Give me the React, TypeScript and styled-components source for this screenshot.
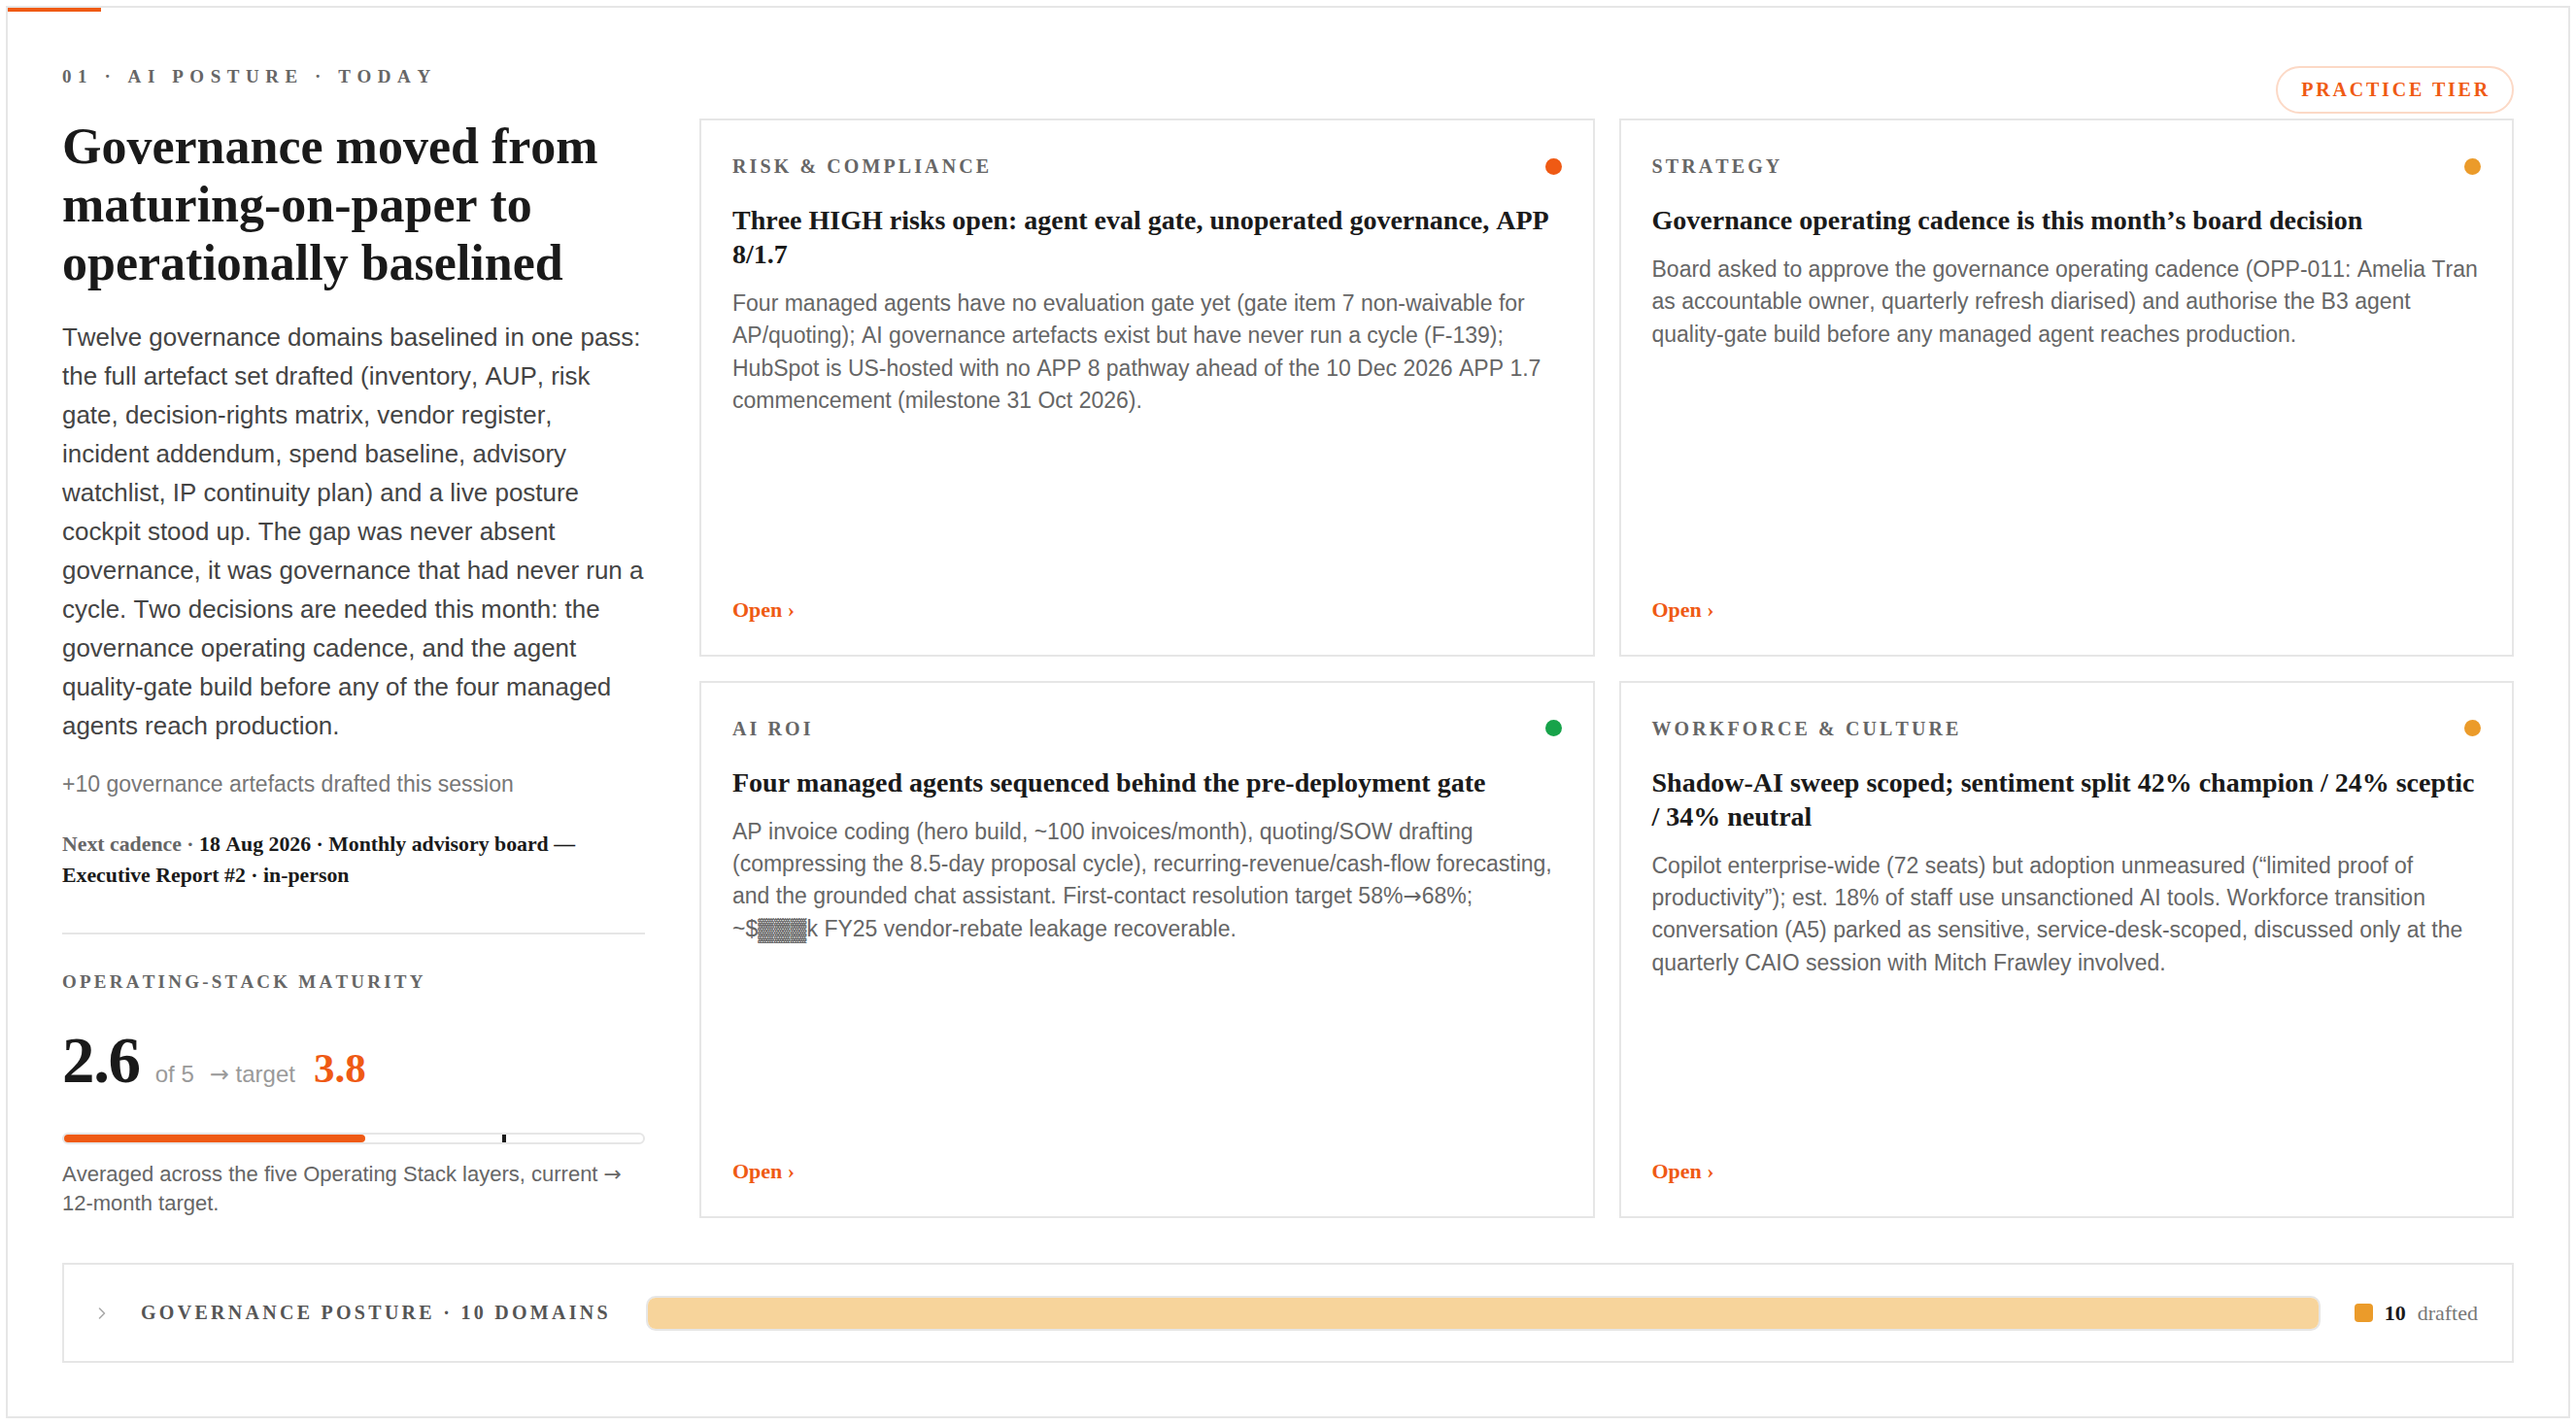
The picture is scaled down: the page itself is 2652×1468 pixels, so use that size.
import type { ReactNode } from "react";
import styled, { createGlobalStyle } from "styled-components";

const ORANGE = "#ef5a14";
const AMBER = "#eb9b2a";
const GREEN = "#17a34a";
const LINE = "#e6e6e6";
const SERIF = `"Liberation Serif", "Times New Roman", serif`;
const SANS = `"Liberation Sans", Arial, sans-serif`;

const GlobalStyle = createGlobalStyle`
  html, body {
    margin: 0;
    padding: 0;
    background: #fff;
  }
  body {
    font-family: ${SANS};
    font-kerning: none;
    color: #1a1a1a;
  }
  * { box-sizing: border-box; }
`;

const Frame = styled.section`
  position: relative;
  margin: 6px;
  border: 2px solid ${LINE};
  padding: 60px 56px 55px;
  background: #fff;
`;

const Accent = styled.span`
  position: absolute;
  top: 0;
  left: 0;
  width: 96px;
  height: 4px;
  background: ${ORANGE};
`;

const HeaderRow = styled.header`
  display: flex;
  justify-content: space-between;
  align-items: flex-start;
  margin-bottom: 4px;
`;

const Eyebrow = styled.div`
  margin-top: 1px;
  font-family: ${SERIF};
  font-weight: 700;
  font-size: 19px;
  line-height: 20px;
  letter-spacing: 0.345em;
  color: #666;
`;

const TierPill = styled.div`
  border: 2px solid #fcd9c6;
  border-radius: 999px;
  padding: 0 22px 0 24px;
  font-family: ${SERIF};
  font-weight: 700;
  font-size: 20px;
  line-height: 45px;
  letter-spacing: 0.14em;
  color: ${ORANGE};
`;

const Body = styled.div`
  display: grid;
  grid-template-columns: 600px 1fr;
  column-gap: 56px;
`;

const LeftCol = styled.div`
  display: flex;
  flex-direction: column;
`;

const Headline = styled.h1`
  margin: 0;
  font-family: ${SERIF};
  font-weight: 700;
  font-size: 52px;
  line-height: 60px;
  color: #1a1a1a;
`;

const Lede = styled.p`
  margin: 26px 0 0;
  font-size: 25.95px;
  line-height: 40px;
  color: #444;
`;

const Delta = styled.p`
  margin: 24px 0 0;
  font-size: 23px;
  line-height: 32px;
  color: #777;
`;

const Cadence = styled.p`
  margin: 30px 0 0;
  font-family: ${SERIF};
  font-weight: 700;
  font-size: 21.8px;
  line-height: 32px;
  color: #666;

  strong {
    color: #1a1a1a;
  }
`;

const Rule = styled.hr`
  margin: 43px 0 0;
  border: 0;
  height: 2px;
  background: ${LINE};
`;

const SectionLabel = styled.div`
  margin-top: 37px;
  font-family: ${SERIF};
  font-weight: 700;
  font-size: 19px;
  line-height: 24px;
  letter-spacing: 0.17em;
  color: #666;
`;

const StatRow = styled.div`
  margin-top: 35px;
  display: flex;
  align-items: baseline;
  gap: 16px;
  line-height: 1;
`;

const Score = styled.span`
  font-family: ${SERIF};
  font-weight: 700;
  font-size: 67px;
  letter-spacing: -0.02em;
  color: #1a1a1a;
`;

const ScoreMeta = styled.span`
  font-size: 24px;
  color: #9a9a9a;
`;

const Arrow = styled.span`
  font-family: "DejaVu Sans", sans-serif;
`;

const TargetScore = styled.span`
  margin-left: 3px;
  font-family: ${SERIF};
  font-weight: 700;
  font-size: 43px;
  color: ${ORANGE};
`;

const Track = styled.div`
  position: relative;
  margin-top: 41px;
  height: 12px;
  border: 2px solid ${LINE};
  border-radius: 6px;
`;

const TrackFill = styled.div`
  height: 100%;
  background: ${ORANGE};
  border-radius: 4px;
`;

const TargetMark = styled.span`
  position: absolute;
  top: 0;
  bottom: 0;
  width: 4px;
  margin-left: -2px;
  background: #1a1a1a;
`;

const Note = styled.p`
  margin: 16px 0 0;
  font-size: 22px;
  line-height: 30px;
  color: #666;
`;

const CardGrid = styled.div`
  display: grid;
  grid-template-columns: 1fr 1fr;
  grid-template-rows: 1fr 1fr;
  gap: 25px;
  margin-top: 1px;
`;

const Card = styled.article`
  display: flex;
  flex-direction: column;
  border: 2px solid ${LINE};
  padding: 35px 32px 33px;
  background: #fff;
`;

const CardHead = styled.div`
  display: flex;
  justify-content: space-between;
  align-items: center;
  height: 24px;
`;

const CardLabel = styled.span`
  font-family: ${SERIF};
  font-weight: 700;
  font-size: 20px;
  line-height: 24px;
  letter-spacing: 0.155em;
  color: #666;
`;

const Dot = styled.span<{ $color: string }>`
  width: 17px;
  height: 17px;
  border-radius: 50%;
  background: ${(p) => p.$color};
`;

const CardTitle = styled.h3`
  margin: 26px 0 0;
  font-family: ${SERIF};
  font-weight: 700;
  font-size: 28px;
  line-height: 35px;
  color: #1a1a1a;
`;

const CardBody = styled.p`
  margin: 17px 0 0;
  font-size: 23px;
  line-height: 33.4px;
  color: #666;
`;

const OpenLink = styled.a`
  margin-top: auto;
  align-self: flex-start;
  font-family: ${SERIF};
  font-weight: 700;
  font-size: 22px;
  line-height: 26px;
  color: ${ORANGE};
  text-decoration: none;
`;

const Posture = styled.div`
  display: flex;
  align-items: center;
  gap: 36px;
  margin-top: 46px;
  height: 103px;
  padding: 0 35px 0 34px;
  border: 2px solid ${LINE};
`;

const Chevron = styled.svg`
  flex: none;
  margin-right: -1px;
`;

const PostureLabel = styled.span`
  font-family: ${SERIF};
  font-weight: 700;
  font-size: 20px;
  letter-spacing: 0.164em;
  color: #555;
  white-space: nowrap;
`;

const PostureBar = styled.div`
  flex: 1;
  display: flex;
  height: 36px;
  border: 2px solid ${LINE};
  border-radius: 10px;
  overflow: hidden;
`;

const PostureSegment = styled.div<{ $color: string }>`
  background: ${(p) => p.$color};
`;

const Legend = styled.div`
  display: flex;
  align-items: center;
  gap: 12px;
  margin-left: -1px;
  font-family: ${SERIF};
  font-size: 22px;
`;

const Swatch = styled.span<{ $color: string }>`
  width: 19px;
  height: 19px;
  border-radius: 4px;
  background: ${(p) => p.$color};
`;

const LegendCount = styled.span`
  font-weight: 700;
  color: #1a1a1a;
`;

const LegendText = styled.span`
  color: #777;
`;

type Pillar = {
  label: string;
  status: string;
  title: string;
  body: ReactNode;
};

const pillars: Pillar[] = [
  {
    label: "RISK & COMPLIANCE",
    status: ORANGE,
    title: "Three HIGH risks open: agent eval gate, unoperated governance, APP 8/1.7",
    body: "Four managed agents have no evaluation gate yet (gate item 7 non-waivable for AP/quoting); AI governance artefacts exist but have never run a cycle (F-139); HubSpot is US-hosted with no APP 8 pathway ahead of the 10 Dec 2026 APP 1.7 commencement (milestone 31 Oct 2026).",
  },
  {
    label: "STRATEGY",
    status: AMBER,
    title: "Governance operating cadence is this month’s board decision",
    body: "Board asked to approve the governance operating cadence (OPP-011: Amelia Tran as accountable owner, quarterly refresh diarised) and authorise the B3 agent quality-gate build before any managed agent reaches production.",
  },
  {
    label: "AI ROI",
    status: GREEN,
    title: "Four managed agents sequenced behind the pre-deployment gate",
    body: (
      <>
        AP invoice coding (hero build, ~100 invoices/month), quoting/SOW drafting (compressing the
        8.5-day proposal cycle), recurring-revenue/cash-flow forecasting, and the grounded chat
        assistant. First-contact resolution target 58%<Arrow>→</Arrow>68%; ~$▓▓▓k FY25
        vendor-rebate leakage recoverable.
      </>
    ),
  },
  {
    label: "WORKFORCE & CULTURE",
    status: AMBER,
    title: "Shadow-AI sweep scoped; sentiment split 42% champion / 24% sceptic / 34% neutral",
    body: "Copilot enterprise-wide (72 seats) but adoption unmeasured (“limited proof of productivity”); est. 18% of staff use unsanctioned AI tools. Workforce transition conversation (A5) parked as sensitive, service-desk-scoped, discussed only at the quarterly CAIO session with Mitch Frawley involved.",
  },
];

const maturity = { current: 2.6, target: 3.8, max: 5 };

const App = () => {
  return (
    <>
      <GlobalStyle />
      <Frame>
        <Accent />
        <HeaderRow>
          <Eyebrow>01 · AI POSTURE · TODAY</Eyebrow>
          <TierPill>PRACTICE TIER</TierPill>
        </HeaderRow>

        <Body>
          <LeftCol>
            <Headline>
              Governance moved from maturing-on-paper to operationally baselined
            </Headline>
            <Lede>
              Twelve governance domains baselined in one pass: the full artefact set drafted
              (inventory, AUP, risk gate, decision-rights matrix, vendor register, incident
              addendum, spend baseline, advisory watchlist, IP continuity plan) and a live
              posture cockpit stood up. The gap was never absent governance, it was governance
              that had never run a cycle. Two decisions are needed this month: the governance
              operating cadence, and the agent quality-gate build before any of the four
              managed agents reach production.
            </Lede>
            <Delta>+10 governance artefacts drafted this session</Delta>
            <Cadence>
              Next cadence · <strong>18 Aug 2026 · Monthly advisory board — Executive Report #2 · in-person</strong>
            </Cadence>

            <Rule />

            <SectionLabel>OPERATING-STACK MATURITY</SectionLabel>
            <StatRow>
              <Score>{maturity.current}</Score>
              <ScoreMeta>of {maturity.max}</ScoreMeta>
              <ScoreMeta>
                <Arrow>→</Arrow> target
              </ScoreMeta>
              <TargetScore>{maturity.target}</TargetScore>
            </StatRow>
            <Track>
              <TrackFill style={{ width: `${(maturity.current / maturity.max) * 100}%` }} />
              <TargetMark style={{ left: `${(maturity.target / maturity.max) * 100}%` }} />
            </Track>
            <Note>
              Averaged across the five Operating Stack layers, current <Arrow>→</Arrow> 12-month
              target.
            </Note>
          </LeftCol>

          <CardGrid>
            {pillars.map((p) => (
              <Card key={p.label}>
                <CardHead>
                  <CardLabel>{p.label}</CardLabel>
                  <Dot $color={p.status} />
                </CardHead>
                <CardTitle>{p.title}</CardTitle>
                <CardBody>{p.body}</CardBody>
                <OpenLink href="#">Open ›</OpenLink>
              </Card>
            ))}
          </CardGrid>
        </Body>

        <Posture>
          <Chevron width="10" height="14" viewBox="0 0 10 14" fill="none">
            <path d="M2.5 2 L7.5 7 L2.5 12" stroke="#aaa" strokeWidth="1.6" strokeLinecap="round" strokeLinejoin="round" />
          </Chevron>
          <PostureLabel>GOVERNANCE POSTURE · 10 DOMAINS</PostureLabel>
          <PostureBar>
            <PostureSegment $color="#f7d49b" style={{ width: "100%" }} />
          </PostureBar>
          <Legend>
            <Swatch $color={AMBER} />
            <LegendCount>10</LegendCount>
            <LegendText>drafted</LegendText>
          </Legend>
        </Posture>
      </Frame>
    </>
  );
};

export default App;
